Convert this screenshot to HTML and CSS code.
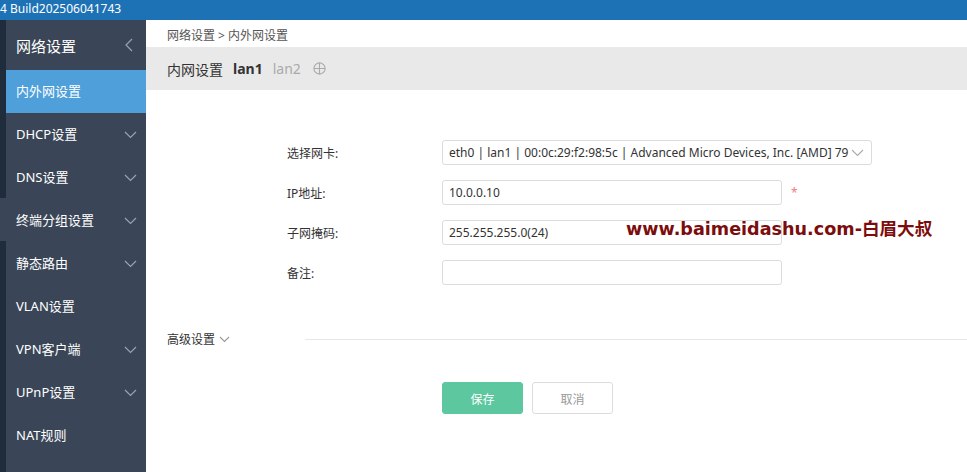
FILE: index.html
```html
<!DOCTYPE html>
<html lang="zh-CN">
<head>
<meta charset="utf-8">
<title>内外网设置</title>
<link rel="stylesheet" href="styles.css">
</head>
<body>
<div class="topbar">4 Build202506041743</div>
<div class="layout">
  <div class="strip">
    <div class="strip-dark s1"></div>
    <div class="strip-light"></div>
    <div class="strip-dark s2"></div>
  </div>
  <nav class="sidebar">
    <div class="side-head">
      <span>网络设置</span>
      <svg class="chev-left" width="8" height="14" viewBox="0 0 8 14"><path d="M7 1 L1 7 L7 13" fill="none" stroke="#9aa3ad" stroke-width="1.2"/></svg>
    </div>
    <div class="item active"><span>内外网设置</span></div>
    <div class="item"><span>DHCP设置</span><svg class="chev" width="13" height="8" viewBox="0 0 13 8"><path d="M1 1 L6.5 6.5 L12 1" fill="none" stroke="#9aa3ad" stroke-width="1.2"/></svg></div>
    <div class="item"><span>DNS设置</span><svg class="chev" width="13" height="8" viewBox="0 0 13 8"><path d="M1 1 L6.5 6.5 L12 1" fill="none" stroke="#9aa3ad" stroke-width="1.2"/></svg></div>
    <div class="item"><span>终端分组设置</span><svg class="chev" width="13" height="8" viewBox="0 0 13 8"><path d="M1 1 L6.5 6.5 L12 1" fill="none" stroke="#9aa3ad" stroke-width="1.2"/></svg></div>
    <div class="item"><span>静态路由</span><svg class="chev" width="13" height="8" viewBox="0 0 13 8"><path d="M1 1 L6.5 6.5 L12 1" fill="none" stroke="#9aa3ad" stroke-width="1.2"/></svg></div>
    <div class="item"><span>VLAN设置</span></div>
    <div class="item"><span>VPN客户端</span><svg class="chev" width="13" height="8" viewBox="0 0 13 8"><path d="M1 1 L6.5 6.5 L12 1" fill="none" stroke="#9aa3ad" stroke-width="1.2"/></svg></div>
    <div class="item"><span>UPnP设置</span><svg class="chev" width="13" height="8" viewBox="0 0 13 8"><path d="M1 1 L6.5 6.5 L12 1" fill="none" stroke="#9aa3ad" stroke-width="1.2"/></svg></div>
    <div class="item"><span>NAT规则</span></div>
  </nav>
  <main class="main">
    <div class="crumb">网络设置 &gt; 内外网设置</div>
    <div class="tabs">
      <span class="tab-title">内网设置</span>
      <span class="tab on">lan1</span>
      <span class="tab">lan2</span>
      <svg class="plus" width="13" height="13" viewBox="0 0 13 13"><circle cx="6.5" cy="6.5" r="5.6" fill="none" stroke="#aaa" stroke-width="1.1"/><path d="M1 6.5 H12 M6.5 1 V12" stroke="#aaa" stroke-width="1.1"/></svg>
    </div>
    <form class="form">
      <div class="row">
        <label>选择网卡:</label>
        <div class="field select">
          <span>eth0 | lan1 | 00:0c:29:f2:98:5c | Advanced Micro Devices, Inc. [AMD] 79</span>
          <svg width="13" height="8" viewBox="0 0 13 8"><path d="M1 1 L6.5 6.5 L12 1" fill="none" stroke="#aaa" stroke-width="1.1"/></svg>
        </div>
      </div>
      <div class="row">
        <label>IP地址:</label>
        <div class="field input">10.0.0.10</div>
        <span class="req">*</span>
      </div>
      <div class="row">
        <label>子网掩码:</label>
        <div class="field input">255.255.255.0(24)</div>
      </div>
      <div class="row">
        <label>备注:</label>
        <div class="field input"></div>
      </div>
      <div class="watermark">www.baimeidashu.com-白眉大叔</div>
    </form>
    <div class="adv">
      <span class="adv-label">高级设置</span>
      <svg width="11" height="7" viewBox="0 0 11 7"><path d="M1 1 L5.5 5.5 L10 1" fill="none" stroke="#999" stroke-width="1.1"/></svg>
      <div class="adv-line"></div>
    </div>
    <div class="buttons">
      <button type="button" class="btn save">保存</button>
      <button type="button" class="btn cancel">取消</button>
    </div>
  </main>
</div>
</body>
</html>
```

FILE: styles.css
```css
* { box-sizing: border-box; }
html, body { margin: 0; padding: 0; height: 100%; }
body {
  font-family: "Noto Sans", "Noto Sans CJK SC", sans-serif;
  font-size: 12px;
  color: #333;
  background: #fff;
  overflow: hidden;
}
.topbar {
  height: 20px;
  background: #1d72b6;
  color: #fff;
  font-size: 12px;
  line-height: 18px;
  padding-left: 0;
  white-space: nowrap;
}
.layout {
  display: flex;
  height: 452px;
}
.strip {
  width: 6px;
  display: flex;
  flex-direction: column;
}
.strip-dark { background: #1f2c3b; }
.s1 { height: 178px; }
.strip-light { height: 43px; background: #3a4657; }
.s2 { flex: 1; }
.sidebar {
  width: 140px;
  background: #3a4657;
  display: flex;
  flex-direction: column;
}
.side-head {
  height: 50px;
  display: flex;
  align-items: center;
  justify-content: space-between;
  padding: 0 13px 0 10px;
  color: #fff;
  font-size: 15px;
}
.item {
  height: 43px;
  display: flex;
  align-items: center;
  justify-content: space-between;
  padding: 0 9px 2px 10px;
  color: #fff;
  font-size: 13px;
}
.item .chev { margin-top: 2px; }
.item.active { background: #4e9fda; }
.main {
  flex: 1;
  display: flex;
  flex-direction: column;
  position: relative;
}
.crumb {
  height: 27px;
  padding: 6px 0 0 21px;
  font-size: 12px;
  color: #555;
}
.tabs {
  height: 43px;
  background: #e9e9e9;
  display: flex;
  align-items: center;
  padding-left: 21px;
  font-size: 14px;
}
.tab-title { color: #333; margin-right: 10px; }
.tab { color: #aaa; margin-right: 10px; }
.tab.on { color: #333; font-weight: bold; }
.plus { margin-left: 2px; }
.form {
  position: relative;
  padding: 50px 0 0 141px;
  display: flex;
  flex-direction: column;
  gap: 15px;
}
.row {
  display: flex;
  align-items: center;
  height: 25px;
}
.row label {
  width: 155px;
  font-size: 12px;
  color: #333;
}
.field {
  height: 25px;
  border: 1px solid #dcdcdc;
  border-radius: 3px;
  display: flex;
  align-items: center;
  padding: 0 6px;
  font-size: 12px;
  color: #333;
  white-space: nowrap;
  overflow: hidden;
}
.select {
  width: 430px;
  justify-content: space-between;
  padding-right: 7px;
}
.input { width: 340px; }
.req {
  color: #f08080;
  margin-left: 9px;
  font-size: 12px;
}
.watermark {
  position: absolute;
  left: 480px;
  top: 125px;
  color: #7d0c0c;
  font-family: "DejaVu Sans", "Noto Sans CJK SC", sans-serif;
  font-weight: bold;
  font-size: 17.6px;
  white-space: nowrap;
}
.adv {
  margin-top: 45px;
  display: flex;
  align-items: center;
  padding-left: 21px;
  height: 18px;
}
.adv-label { font-size: 12px; color: #333; margin-right: 4px; }
.adv-line {
  flex: 1;
  height: 1px;
  background: #e8e8e8;
  margin-left: 75px;
}
.buttons {
  margin-top: 34px;
  padding-left: 296px;
  display: flex;
  gap: 9px;
}
.btn {
  width: 81px;
  height: 32px;
  border-radius: 3px;
  font-family: "Noto Sans CJK SC", sans-serif;
  font-size: 12px;
  cursor: pointer;
}
.save {
  background: #5dc7a0;
  border: 1px solid #5dc7a0;
  color: #fff;
}
.cancel {
  background: #fff;
  border: 1px solid #dcdcdc;
  color: #999;
}
```
